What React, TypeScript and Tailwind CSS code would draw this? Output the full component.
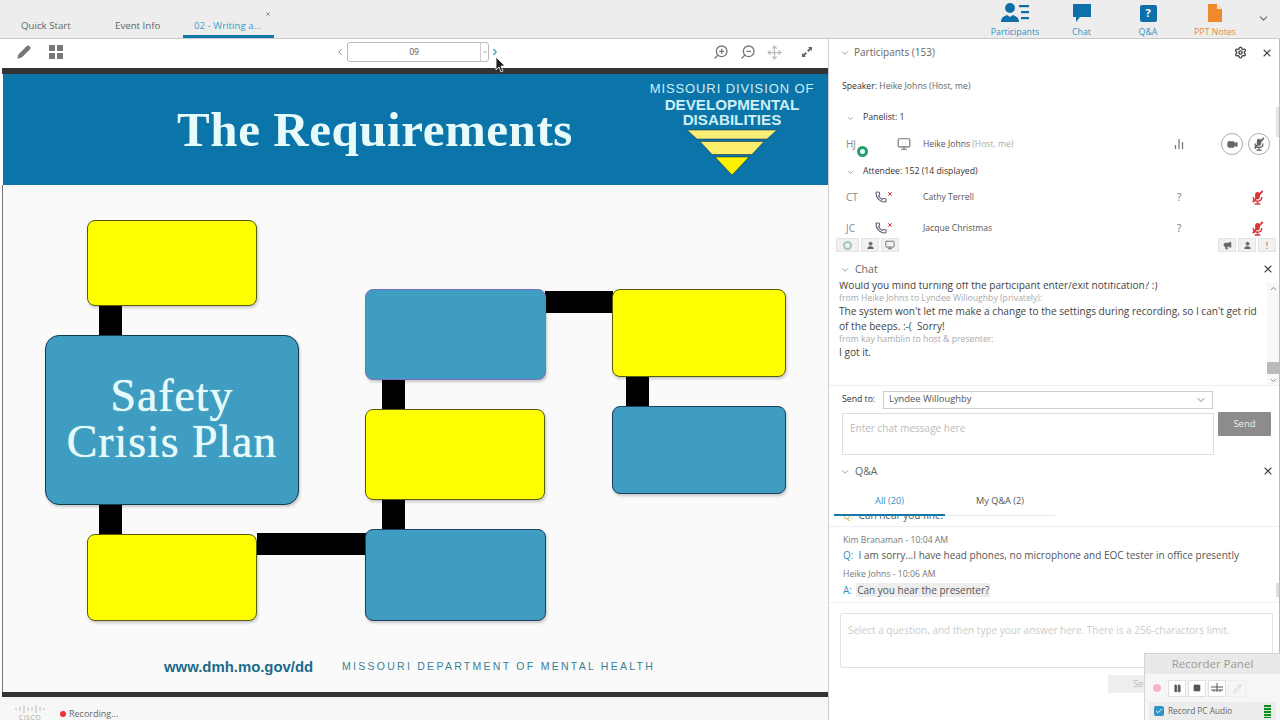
import { ChevronDown, ChevronLeft, ChevronRight, ZoomIn, ZoomOut, Move, Settings, X, Video, Phone, Pause, Square, Pencil, Check, Megaphone, Monitor, User, BarChart2 } from "lucide-react";

const font = { fontFamily: '"Open Sans", "Liberation Sans", sans-serif' };

function MutedMic({ color, size = 15 }: { color: string; size?: number }) {
  return (
    <svg width={size} height={size} viewBox="0 0 16 16" fill="none" stroke={color} strokeWidth="1.5">
      <rect x="5.500" y="2" width="5" height="8" rx="2.500" fill={color} stroke="none" />
      <path d="M3.500 7.500c0 3 2 4.500 4.500 4.500s4.500-1.500 4.500-4.500M8 12v2.500M5 15h6" />
      <path d="M13.500 1L3 13" strokeWidth="2" />
    </svg>
  );
}

function SectionHeader({ title, right }: { title: string; right?: React.ReactNode }) {
  return (
    <div className="flex items-center justify-between h-[20px] shrink-0 pl-[11px] pr-[5px]">
      <div className="flex items-center gap-[5px] text-[#666] text-[10.5px] pt-[2px]">
        <ChevronDown size={10} className="text-[#888]" />
        <span>{title}</span>
      </div>
      <div className="flex items-center gap-[15px] text-[#444] -mt-[1px]">
        {right}
        <X size={12} strokeWidth={2.2} />
      </div>
    </div>
  );
}

function TopIcon({ label, color, children, w }: { label: string; color: string; children: React.ReactNode; w: string }) {
  return (
    <div className={`flex flex-col items-center ${w}`}>
      <div className="h-[24px] flex items-center justify-center">{children}</div>
      <span className="text-[8.800px] leading-[12px] mt-[1px] whitespace-nowrap" style={{ color }}>{label}</span>
    </div>
  );
}

function Box({ c, cls }: { c: "y" | "b" | "p"; cls: string }) {
  const fill =
    c === "y" ? "bg-[#ffff00] border-[#5a5a10]" : c === "p" ? "bg-[#3e9dc1] border-[#7b70b8]" : "bg-[#3e9dc1] border-[#1f3f5f]";
  return <div className={`absolute rounded-[8px] border shadow-[1px_2px_3px_rgba(0,0,0,0.2)] ${fill} ${cls}`} />;
}

function Bar({ cls }: { cls: string }) {
  return <div className={`absolute bg-black ${cls}`} />;
}

function PersonRow({ initials, name, h }: { initials: string; name: string; h: string }) {
  return (
    <div className={`flex items-center ${h} text-[8.6px] text-[#555]`}>
      <span className="w-[17px] ml-[17px] text-[#888] text-[10px]">{initials}</span>
      <span className="w-[60px] pl-[12px] flex items-start">
        <Phone size={12} strokeWidth={2.4} className="text-[#667]" />
        <X size={6} strokeWidth={4} className="text-[#d33]" />
      </span>
      <span className="w-[254px] whitespace-nowrap">{name}</span>
      <span className="w-[73px] text-[#777] text-[10px]">?</span>
      <MutedMic color="#d9383a" />
    </div>
  );
}

function SmallBtn({ children, w = "w-[18px]" }: { children: React.ReactNode; w?: string }) {
  return <div className={`h-[14px] ${w} bg-[#f1f1f1] border border-[#e4e4e4] flex items-center justify-center text-[#666]`}>{children}</div>;
}

export default function App() {
  return (
    <div className="w-[1280px] h-[720px] overflow-hidden relative bg-white flex flex-col" style={font}>
      {/* top bar */}
      <div className="h-[39px] shrink-0 bg-[#ededed] border-b border-[#c9c9c9] flex items-end justify-between">
        <div className="flex items-end text-[9.7px] text-[#666]">
          <div className="w-[94px] pl-[21px] h-[24px] pt-[5px]">Quick Start</div>
          <div className="w-[89px] pl-[21px] h-[24px] pt-[5px]">Event Info</div>
          <div className="w-[91px] h-[24px] pl-[11px] pt-[5px] border-b-[3px] border-[#1279a8] text-[#3a9dcb] relative">
            02 - Writing a...
            <X size={6} strokeWidth={3} className="absolute right-[3px] top-[-3px] text-[#777]" />
          </div>
        </div>
        <div className="flex items-start self-start pt-[1px] pr-[10px]">
          <TopIcon label="Participants" color="#2f93c4" w="w-[62px]">
            <svg width="30" height="22" viewBox="0 0 30 22" fill="#0f6fa8">
              <circle cx="10" cy="6" r="5" />
              <path d="M1 20c0-5 4-6 6-7l3 2 3-2c2 1 6 2 6 7z" />
              <rect x="19" y="3" width="10" height="2.2" />
              <rect x="21" y="9" width="8" height="2.2" />
              <rect x="21" y="15" width="8" height="2.2" />
            </svg>
          </TopIcon>
          <TopIcon label="Chat" color="#2f93c4" w="w-[71px]">
            <svg width="20" height="20" viewBox="0 0 20 20" fill="#0f6fa8"><path d="M1 1h18v13H8l-4 5v-5H1z" /></svg>
          </TopIcon>
          <TopIcon label="Q&A" color="#2f93c4" w="w-[62px]">
            <div className="w-[17px] h-[17px] rounded-[2px] bg-[#0f6fa8] text-white text-[11px] font-bold flex items-center justify-center">?</div>
          </TopIcon>
          <TopIcon label="PPT Notes" color="#e58a3a" w="w-[72px]">
            <svg width="16" height="20" viewBox="0 0 16 20"><path d="M1 1h9l5 5v13H1z" fill="#ef8a2c" /><path d="M10 1l5 5h-5z" fill="#fde3c8" /></svg>
          </TopIcon>
          <ChevronDown size={13} className="text-[#666] mt-[11px] ml-[6px]" />
        </div>
      </div>

      <div className="flex-1 flex min-h-0">
        {/* left: slide area */}
        <div className="w-[829px] shrink-0 flex flex-col bg-white border-r border-[#d0d0d0]">
          <div className="h-[29px] pb-[3px] flex items-center relative shrink-0">
            <Pencil size={14} fill="#777" className="text-[#777] ml-[17px]" />
            <div className="grid grid-cols-2 gap-[2px] ml-[18px]">
              <div className="w-[6px] h-[6px] bg-[#777]" /><div className="w-[6px] h-[6px] bg-[#777]" />
              <div className="w-[6px] h-[6px] bg-[#777]" /><div className="w-[6px] h-[6px] bg-[#777]" />
            </div>
            <ChevronLeft size={10} className="text-[#666] ml-[272px]" />
            <div className="ml-[2px] w-[142px] h-[20px] border border-[#bbb] rounded-[3px] flex text-[8.5px] text-[#555]">
              <div className="flex-1 flex items-center justify-center">09</div>
              <div className="w-[8px] border-l border-[#ccc] flex items-center justify-center"><ChevronDown size={6} /></div>
            </div>
            <ChevronRight size={10} strokeWidth={3} className="text-[#3a9dcb] ml-[1px]" />
            <svg className="absolute left-[495px] top-[17px]" width="11" height="17" viewBox="0 0 11 17"><path d="M1 1v13l3-3 2 5 2-1-2-5h4z" fill="#222" stroke="#fff" strokeWidth="0.8" /></svg>
            <div className="ml-auto flex items-center gap-[11px] text-[#777] pr-[15px]">
              <ZoomIn size={16} className="-scale-x-100" />
              <ZoomOut size={16} className="-scale-x-100" />
              <Move size={15} className="text-[#bbb]" />
              <svg width="12" height="12" viewBox="0 0 12 12" className="ml-[8px]" fill="#666"><path d="M7 1h4v4L9.700 3.700 7.500 5.900 6.100 4.500 8.300 2.300zM5 11H1V7l1.300 1.300 2.200-2.200 1.400 1.400-2.200 2.200z" /></svg>
            </div>
          </div>

          {/* slide */}
          <div className="flex-1 flex flex-col pl-[3px] min-h-0">
            <div className="h-[6px] bg-[#333] -ml-[1px] shrink-0" />
            <div className="h-[111px] bg-[#0b75aa] relative flex items-center shrink-0">
              <div className="w-[640px] ml-[52px] text-center text-[#e8fbfb] font-bold text-[49px] leading-none tracking-[0.55px]" style={{ fontFamily: '"Liberation Serif", serif' }}>The Requirements</div>
              <div className="absolute left-[646px] top-[7px] w-[166px] flex flex-col items-center text-[#cdeff5] leading-[15.500px]" style={{ fontFamily: '"Liberation Sans", sans-serif' }}>
                <div className="text-[13px] tracking-[0.9px] whitespace-nowrap">MISSOURI DIVISION OF</div>
                <div className="text-[15.200px] font-bold whitespace-nowrap">DEVELOPMENTAL</div>
                <div className="text-[15.200px] font-bold whitespace-nowrap">DISABILITIES</div>
                <svg width="90" height="48" viewBox="0 0 90 48" className="mt-[1px]">
                  <path d="M0 1h90l-10 9H10z" fill="#fbee78" stroke="#123" strokeWidth="0.5" />
                  <path d="M13 12.500h64l-12 13H25z" fill="#fcee6d" stroke="#123" strokeWidth="0.5" />
                  <path d="M28 28h34L45 46z" fill="#fff200" stroke="#123" strokeWidth="0.5" />
                </svg>
              </div>
            </div>

            <div className="flex-1 relative border-l border-[#777] -ml-[1px] bg-[#fafafb]">
              <Bar cls="left-[96px] top-[120px] w-[23px] h-[30px]" />
              <Bar cls="left-[96px] top-[320px] w-[23px] h-[30px]" />
              <Bar cls="left-[254px] top-[348px] w-[110px] h-[22px]" />
              <Bar cls="left-[379px] top-[315px] w-[23px] h-[30px]" />
              <Bar cls="left-[379px] top-[195px] w-[23px] h-[30px]" />
              <Bar cls="left-[542px] top-[106px] w-[68px] h-[22px]" />
              <Bar cls="left-[623px] top-[191px] w-[23px] h-[30px]" />
              <Box c="y" cls="left-[84px] top-[35px] w-[170px] h-[86px]" />
              <Box c="y" cls="left-[84px] top-[349px] w-[170px] h-[87px]" />
              <div className="absolute left-[42px] top-[150px] w-[254px] h-[170px] rounded-[14px] bg-[#3e9dc1] border border-[#123a50] shadow-[1px_2px_3px_rgba(0,0,0,0.2)] flex flex-col items-center justify-center text-[#e6fbfb] text-[46px] leading-[46px] tracking-[0.9px] pb-[3px] [text-shadow:0_0_1px_#e6fbfb]" style={{ fontFamily: '"Liberation Serif", serif' }}>
                <span>Safety</span>
                <span className="whitespace-nowrap">Crisis Plan</span>
              </div>
              <Box c="p" cls="left-[362px] top-[104px] w-[181px] h-[91px]" />
              <Box c="y" cls="left-[362px] top-[224px] w-[180px] h-[91px]" />
              <Box c="b" cls="left-[362px] top-[344px] w-[181px] h-[92px]" />
              <Box c="y" cls="left-[609px] top-[104px] w-[174px] h-[88px]" />
              <Box c="b" cls="left-[609px] top-[221px] w-[174px] h-[88px]" />
              <div className="absolute left-[161px] top-[471px] text-[14.900px] font-bold text-[#1b6a8a] whitespace-nowrap" style={{ fontFamily: '"Liberation Sans", sans-serif' }}>www.dmh.mo.gov/dd</div>
              <div className="absolute left-[339px] top-[474px] text-[10.500px] tracking-[2.270px] text-[#3a7f95] whitespace-nowrap" style={{ fontFamily: '"Liberation Sans", sans-serif' }}>MISSOURI DEPARTMENT OF MENTAL HEALTH</div>
            </div>
            <div className="h-[5px] bg-[#333] -ml-[1px] shrink-0" />
          </div>

          <div className="h-[23px] shrink-0 bg-[#f7f7f7] flex items-start overflow-hidden">
            <div className="ml-[15px] mt-[8px] w-[30px] flex flex-col items-center text-[#aaa]">
              <svg width="30" height="8" viewBox="0 0 30 8" stroke="#bbb" strokeWidth="1">
                <path d="M1 3v2M5 2v4M9 0v8M13 2v4M17 2v4M21 0v8M25 2v4M29 3v2" />
              </svg>
              <span className="text-[7px] leading-[9px] tracking-[0.5px]">CISCO</span>
            </div>
            <div className="flex items-center ml-[15px] mt-[10px] text-[9px] text-[#666]">
              <span className="w-[6px] h-[6px] rounded-full bg-[#e33] mr-[3px]" />
              Recording...
            </div>
          </div>
        </div>

        {/* right panel */}
        <div className="flex-1 flex flex-col min-w-0 border-r border-[#bbb]">
          <div className="flex items-center justify-between h-[27px] pl-[11px] pr-[6px] shrink-0">
            <div className="flex items-center gap-[4px] text-[#666] text-[10px]">
              <ChevronDown size={10} className="text-[#888]" />
              Participants (153)
            </div>
            <div className="flex items-center gap-[14px] text-[#444]">
              <Settings size={13} strokeWidth={2.6} />
              <X size={12} strokeWidth={2.2} />
            </div>
          </div>

          <div className="h-[180px] shrink-0 relative flex flex-col">
            <div className="h-[38px] pl-[13px] pt-[14px] text-[8.700px] text-[#666]"><span className="text-[#333]">Speaker:</span> Heike Johns (Host, me)</div>
            <div className="h-[26px] flex items-center pl-[17px] pt-[2px] text-[8.700px] text-[#333]">
              <ChevronDown size={9} className="mr-[8px] text-[#888]" />Panelist: 1
            </div>
            <div className="h-[28px] flex items-center text-[8.600px] text-[#555]">
              <span className="w-[17px] ml-[17px] text-[#888] text-[10px] relative">HJ
                <span className="absolute left-[11px] top-[9px] w-[11px] h-[11px] rounded-full border-[3px] border-[#2a9d6b] bg-[#dff]" />
              </span>
              <span className="w-[60px] pl-[34px]"><Monitor size={14} className="text-[#777]" /></span>
              <span className="w-[250px] whitespace-nowrap">Heike Johns <span className="text-[#aaa]">(Host, me)</span></span>
              <BarChart2 size={12} strokeWidth={2.5} className="text-[#777]" />
              <div className="w-[22px] h-[22px] rounded-full border border-[#aaa] flex items-center justify-center ml-[36px]"><Video size={11} fill="#666" className="text-[#666]" /></div>
              <div className="w-[22px] h-[22px] rounded-full border border-[#aaa] flex items-center justify-center ml-[5px]"><MutedMic color="#666" size={14} /></div>
            </div>
            <div className="h-[26px] flex items-center pl-[17px] pt-[2px] text-[8.700px] text-[#333]">
              <ChevronDown size={9} className="mr-[8px] text-[#888]" />Attendee: 152 (14 displayed)
            </div>
            <PersonRow initials="CT" name="Cathy Terrell" h="h-[26px]" />
            <PersonRow initials="JC" name="Jacque Christmas" h="h-[36px]" />
            <div className="absolute left-0 right-0 bottom-[-7px] flex items-center h-[16px] pl-[7px] pr-[3px] gap-[2px]">
              <SmallBtn w="w-[23px]"><span className="w-[9px] h-[9px] rounded-full border-2 border-[#9cc9b8]" /></SmallBtn>
              <SmallBtn><User size={9} fill="#666" /></SmallBtn>
              <SmallBtn><Monitor size={10} /></SmallBtn>
              <div className="flex-1" />
              <SmallBtn><Megaphone size={9} fill="#666" /></SmallBtn>
              <SmallBtn><User size={9} fill="#666" /></SmallBtn>
              <SmallBtn><span className="text-[9px] leading-none">!</span></SmallBtn>
            </div>
            <div className="absolute right-0 top-[41px] w-[3px] h-[30px] bg-[#e2e2e2]" />
          </div>

          <div className="h-[13px] shrink-0" />
          <SectionHeader title="Chat" />

          <div className="h-[104px] mt-[3px] shrink-0 relative border-b border-[#eee] pl-[10px] pr-[20px] overflow-hidden">
            <div className="-mt-[4px] text-[10.100px] leading-[14px] text-[#444] whitespace-nowrap">
              <div>Would you mind turning off the participant enter/exit notification? :)</div>
              <div className="text-[8.700px] leading-[12px] text-[#aaa]">from Heike Johns to Lyndee Willoughby (privately):</div>
              <div className="leading-[15px]">The system won't let me make a change to the settings during recording, so I can't get rid</div>
              <div className="leading-[14px]">of the beeps. :-(&nbsp; Sorry!</div>
              <div className="text-[8.700px] leading-[12px] text-[#aaa]">from kay hamblin to host &amp; presenter:</div>
              <div>I got it.</div>
            </div>
            <div className="absolute right-[0px] top-0 bottom-0 w-[12px] bg-[#f8f8f8] flex flex-col items-center justify-between text-[#666]">
              <ChevronDown size={9} className="rotate-180 mt-[2px]" />
              <div className="w-full h-[12px] bg-[#bbb] mt-auto mb-[2px]" />
              <ChevronDown size={9} />
            </div>
          </div>

          <div className="flex items-center h-[27px] pl-[13px] pr-[66px] shrink-0 text-[9.400px]">
            <span className="w-[41px] text-[#333] text-[8.700px]">Send to:</span>
            <div className="flex-1 h-[18px] border border-[#ccc] flex items-center justify-between px-[5px] text-[#555]">
              Lyndee Willoughby
              <ChevronDown size={12} className="text-[#888]" />
            </div>
          </div>
          <div className="flex h-[42px] pl-[13px] pr-[8px] gap-[4px] shrink-0">
            <div className="w-[372px] h-[42px] border border-[#ddd] px-[7px] pt-[7px] text-[10px] text-[#bbb]">Enter chat message here</div>
            <div className="w-[53px] h-[24px] -mt-[1px] bg-[#8c8c8c] rounded-[1px] flex items-center justify-center text-[9.500px] text-[#eee]">Send</div>
          </div>

          <div className="h-[6px] shrink-0" />
          <SectionHeader title="Q&A" />

          <div className="flex h-[35px] shrink-0 pl-[5px] text-[9.200px] relative bg-white z-10">
            <div className="w-[111px] h-[35px] pt-[6px] flex items-center justify-center text-[#2f93c4] border-b-2 border-[#1279a8]">All (20)</div>
            <div className="w-[110px] h-[35px] pt-[6px] flex items-center justify-center text-[#555] border-b border-[#e8e8e8]">My Q&amp;A (2)</div>
          </div>
          <div className="h-[11px] shrink-0 overflow-hidden pl-[14px] border-b border-[#eee]">
            <div className="-mt-[8px] text-[10px] leading-[14px] text-[#555] whitespace-nowrap"><span className="text-[#d8b94a]">Q:</span>&nbsp; Can hear you fine.</div>
          </div>

          <div className="h-[76px] shrink-0 pl-[14px] pr-[6px] relative border-b border-[#f0f0f0]">
            <div className="text-[8.700px] text-[#777] leading-[11px] pt-[8px] box-content">Kim Branaman - 10:04 AM</div>
            <div className="text-[10px] text-[#555] leading-[14px] mt-[2px] whitespace-nowrap"><span className="text-[#2f93c4]">Q:</span>&nbsp; I am sorry...I have head phones, no microphone and EOC tester in office presently</div>
            <div className="text-[8.700px] text-[#777] leading-[11px] mt-[7px]">Heike Johns - 10:06 AM</div>
            <div className="text-[10px] text-[#555] leading-[14px] mt-[3px]"><span className="text-[#2f93c4]">A:</span>&nbsp;&thinsp;<span className="bg-[#eee] px-[1px]">Can you hear the presenter?</span></div>
            <div className="absolute right-[0px] top-[56px] w-[3px] h-[14px] bg-[#ddd]" />
          </div>

          <div className="ml-[11px] mr-[6px] mt-[10px] h-[55px] shrink-0 border border-[#e2e2e2] rounded-[2px] px-[7px] pt-[9px] text-[10px] text-[#ccc] whitespace-nowrap overflow-hidden">
            Select a question, and then type your answer here. There is a 256-charactors limit.
          </div>
          <div className="flex justify-end pr-[99px] mt-[7px]">
            <div className="w-[72px] h-[18px] bg-[#eee] text-[9.500px] text-[#bbb] flex items-center justify-center">Send</div>
          </div>
        </div>
      </div>

      {/* floating recorder panel */}
      <div className="absolute left-[1144px] top-[653px] w-[136px] h-[67px] bg-[#f6f6f6] border-t border-l border-[#d4d4d4] flex flex-col">
        <div className="h-[20px] bg-[#e9e9e9] flex items-center justify-center text-[11.500px] text-[#999] shrink-0">Recorder Panel</div>
        <div className="flex items-center gap-[2px] pl-[3px] pt-[3px] h-[25px] shrink-0">
          <div className="w-[18px] h-[17px] flex items-center justify-center"><span className="w-[8px] h-[8px] rounded-full bg-[#f4b4c0]" /></div>
          <div className="w-[18px] h-[17px] border border-[#e0e0e0] bg-white flex items-center justify-center"><Pause size={9} fill="#555" className="text-[#555]" /></div>
          <div className="w-[18px] h-[17px] border border-[#e0e0e0] bg-white flex items-center justify-center"><Square size={8} fill="#555" className="text-[#555]" /></div>
          <div className="w-[18px] h-[17px] border border-[#e0e0e0] bg-white flex items-center justify-center text-[#555]">
            <svg width="12" height="10" viewBox="0 0 12 10" stroke="#555" strokeWidth="1"><path d="M0 4h12M0 7h12M6 0v9M3 7v2M9 7v2" /></svg>
          </div>
          <div className="w-[18px] h-[17px] border border-[#eee] flex items-center justify-center"><Pencil size={9} className="text-[#ccc]" /></div>
        </div>
        <div className="mx-[4px] mt-[3px] h-[18px] bg-[#ececec] flex items-center pl-[5px] text-[8.300px] text-[#666]">
          <span className="w-[10px] h-[10px] rounded-[2px] bg-[#2f93c4] flex items-center justify-center mr-[4px]"><Check size={8} strokeWidth={3} className="text-white" /></span>
          Record PC Audio
          <span className="ml-auto mr-[5px] w-[7px] h-[13px] bg-[repeating-linear-gradient(to_bottom,#0f8a1f_0,#0f8a1f_2px,#cde8cf_2px,#cde8cf_3px)]" />
        </div>
      </div>
    </div>
  );
}
